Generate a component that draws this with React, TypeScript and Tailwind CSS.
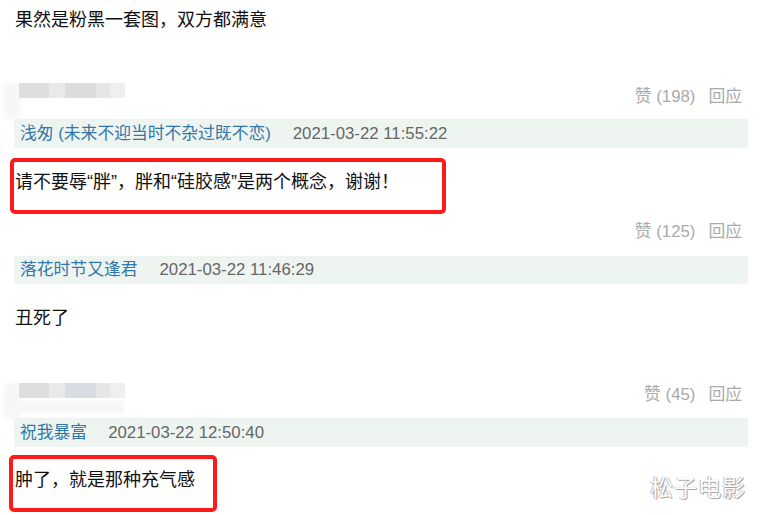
const font = { fontFamily: '"Liberation Sans", "Noto Sans CJK SC", sans-serif' };

const Blur = ({ second }: { second?: boolean }) => (
  <div className="relative mt-[1px] h-[16px] w-[126px]">
    <div className="absolute left-[4px] top-0 h-[36px] w-[16px] bg-[#f5f6f6] blur-[2px]" />
    <div className="absolute left-[19px] top-0 flex h-[15px] blur-[0.6px]">
      <div className="w-[30px] bg-[#dedede]" />
      <div className="w-[16px] bg-[#e9e9e9]" />
      <div className={`w-[31px] ${second ? 'bg-[#d9dde3]' : 'bg-[#dcdcdc]'}`} />
      <div className="w-[14px] bg-[#e6e6e6]" />
      <div className="w-[15px] bg-[#efefef]" />
    </div>
    {second && (
      <div className="absolute left-[19px] top-[18px] h-[12px] w-[105px] bg-[#f6f7f7] blur-[1px]" />
    )}
  </div>
);

const Vote = ({ n }: { n: number }) => (
  <div className="flex items-center gap-[13px] pr-[18px] text-[16.8px] leading-[30px] text-[#aaaaaa]">
    <span>赞 ({n})</span>
    <span>回应</span>
  </div>
);

const Band = ({ name, date, gap, h }: { name: string; date: string; gap: number; h: string }) => (
  <div className={`ml-[14px] mr-[12px] flex items-center bg-[#eef5f1] pl-[6px] text-[16.8px] ${h}`}>
    <span className="text-[#3377aa]">{name}</span>
    <span className="text-[#666666]" style={{ marginLeft: gap }}>
      {date}
    </span>
  </div>
);

export default function App() {
  return (
    <div className="relative h-[515px] w-[760px] overflow-hidden bg-white text-[#111111]" style={font}>
      <div className="flex h-[40px] items-center pl-[15px] text-[18px] leading-[24px]">
        果然是粉黑一套图，双方都满意
      </div>

      {/* comment 1 */}
      <div className="mt-[42px] flex h-[30px] items-start justify-between">
        <Blur />
        <Vote n={198} />
      </div>
      <div className="mt-[7px]">
        <Band name="浅匆 (未来不迎当时不杂过既不恋)" date="2021-03-22 11:55:22" gap={22} h="h-[29px]" />
      </div>
      <div className="ml-[10px] mt-[10px] h-[56px] w-[436px] rounded-[5px] border-4 border-[#ff1a1a] pl-[1px] pt-[8px] text-[18px] leading-[24px]">
        请不要辱“胖”，胖和“硅胶感”是两个概念，谢谢！
      </div>

      {/* comment 2 */}
      <div className="mt-[3px] flex h-[30px] justify-end">
        <Vote n={125} />
      </div>
      <div className="mt-[9px]">
        <Band name="落花时节又逢君" date="2021-03-22 11:46:29" gap={22} h="h-[28px]" />
      </div>
      <div className="mt-[22px] pl-[15px] text-[18px] leading-[24px]">丑死了</div>

      {/* comment 3 */}
      <div className="mt-[50px] flex h-[30px] items-start justify-between">
        <div className="mt-[2px]">
          <Blur second />
        </div>
        <Vote n={45} />
      </div>
      <div className="mt-[8px]">
        <Band name="祝我暴富" date="2021-03-22 12:50:40" gap={21} h="h-[29px]" />
      </div>
      <div className="ml-[9px] mt-[8px] h-[57px] w-[208px] rounded-[5px] border-4 border-[#ff1a1a] pl-[2px] pt-[9px] text-[18px] leading-[24px]">
        肿了，就是那种充气感
      </div>

      {/* watermark */}
      <div
        className="absolute left-[650px] top-[474px] text-[23px] leading-[28px] tracking-[1px] text-white"
        style={{ textShadow: '0 0 1px #999, 1px 1px 0 #aaa, -1px 0 0 #ccc' }}
      >
        松子电影
      </div>
    </div>
  );
}
